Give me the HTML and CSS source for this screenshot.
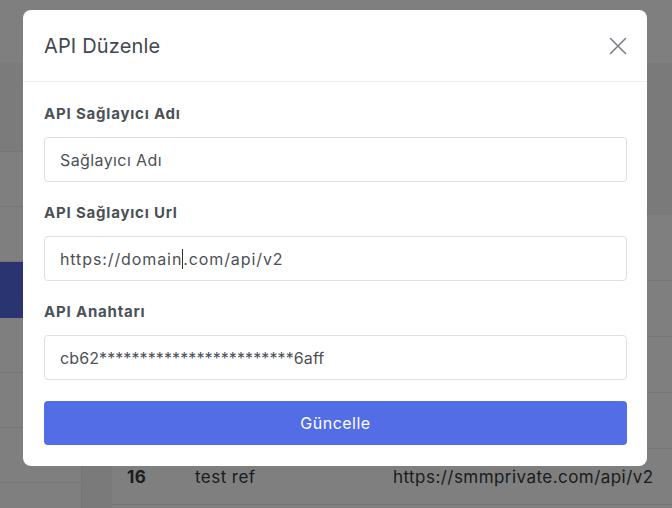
FILE: index.html
```html
<!DOCTYPE html>
<html lang="tr">
<head>
<meta charset="utf-8">
<title>API Düzenle</title>
<link rel="stylesheet" href="styles.css">
</head>
<body>
<div class="page">
  <div class="topbar"></div>
  <div class="main">
    <aside class="sidebar">
      <div class="side-user"></div>
      <div class="side-item"></div>
      <div class="side-item"></div>
      <div class="side-item active"></div>
      <div class="side-item"></div>
      <div class="side-item"></div>
      <div class="side-item"></div>
    </aside>
    <section class="content">
      <div class="card">
        <div class="thead"></div>
        <div class="trow"></div>
        <div class="trow"></div>
        <div class="trow"></div>
        <div class="trow">
          <span class="c-id">16</span>
          <span class="c-name">test ref</span>
          <span class="c-url">https://smmprivate.com/api/v2</span>
        </div>
      </div>
    </section>
  </div>
</div>
<div class="backdrop"></div>
<div class="modal">
  <div class="modal-header">
    <h4 class="modal-title">API Düzenle</h4>
    <button class="close" aria-label="Kapat">
      <svg width="18" height="18" viewBox="0 0 18 18"><path d="M1.5 1.5 L16.5 16.5 M16.5 1.5 L1.5 16.5" stroke="#7a7f85" stroke-width="1.6" fill="none" stroke-linecap="round"/></svg>
    </button>
  </div>
  <div class="modal-body">
    <label class="label">API Sağlayıcı Adı</label>
    <div class="input">Sağlayıcı Adı</div>
    <label class="label">API Sağlayıcı Url</label>
    <div class="input input-url">https://domain<span class="caret"></span>.com/api/v2</div>
    <label class="label">API Anahtarı</label>
    <div class="input input-key">cb62************************6aff</div>
    <button class="btn">Güncelle</button>
  </div>
</div>
</body>
</html>
```

FILE: styles.css
```css
* { box-sizing: border-box; }
html, body {
  margin: 0;
  padding: 0;
  width: 672px;
  height: 508px;
  overflow: hidden;
}
body {
  position: relative;
  font-family: "Inter", "Open Sans", sans-serif;
  background: #f5f5f5;
}
.page {
  display: flex;
  flex-direction: column;
  height: 508px;
}
.topbar {
  height: 63px;
  background: #ffffff;
  flex: none;
}
.main {
  flex: 1;
  display: flex;
}
.sidebar {
  width: 82px;
  background: #ffffff;
  border-right: 1px solid #ececec;
  display: flex;
  flex-direction: column;
}
.side-user {
  height: 89px;
  background: #f6f6f6;
  border-bottom: 1px solid #ececec;
}
.side-item {
  height: 55px;
  border-bottom: 1px solid #ececec;
}
.side-item.active {
  background: #5468e0;
  height: 56px;
  border-bottom: none;
}
.content {
  flex: 1;
  background: #f4f4f4;
  padding: 152px 0 0 30px;
}
.card {
  background: #ffffff;
  height: 100%;
}
.thead {
  height: 66px;
  border-bottom: 1px solid #ececec;
}
.trow {
  height: 56px;
  border-bottom: 1px solid #ececec;
  display: flex;
  align-items: center;
  font-size: 17px;
  letter-spacing: 0.45px;
  color: #343a40;
}
.c-id {
  font-weight: 700;
  width: 83px;
  padding-left: 15px;
}
.c-name {
  width: 198px;
}
.c-url {
  white-space: nowrap;
}
.backdrop {
  position: absolute;
  inset: 0;
  background: rgba(0, 0, 0, 0.5);
}
.modal {
  position: absolute;
  left: 23px;
  top: 10px;
  width: 624px;
  height: 456px;
  background: #ffffff;
  border-radius: 8px;
  display: flex;
  flex-direction: column;
}
.modal-header {
  height: 72px;
  display: flex;
  align-items: center;
  justify-content: space-between;
  padding: 0 20px 0 21px;
  border-bottom: 1px solid #eef0f3;
}
.modal-title {
  margin: 0;
  font-size: 20px;
  font-weight: 400;
  color: #42484f;
  letter-spacing: 0.15px;
}
.close {
  border: none;
  background: none;
  padding: 0;
  width: 18px;
  height: 18px;
  display: flex;
}
.modal-body {
  padding: 21px 20px 21px 21px;
  display: flex;
  flex-direction: column;
}
.label {
  font-size: 15px;
  font-weight: 700;
  color: #4b5157;
  letter-spacing: 0.8px;
  line-height: 22px;
  height: 22px;
  margin-bottom: 12px;
}
.input {
  height: 45px;
  border: 1px solid #dcdfe4;
  border-radius: 4px;
  padding: 0 15px;
  display: flex;
  align-items: center;
  font-size: 16px;
  letter-spacing: 0.4px;
  color: #4b5157;
  margin-bottom: 20px;
  white-space: nowrap;
}
.input-url {
  letter-spacing: 0.9px;
}
.input-key {
  letter-spacing: 0.1px;
}
.caret {
  display: inline-block;
  width: 1px;
  height: 20px;
  background: #333;
}
.btn {
  height: 44px;
  margin-top: 1px;
  border: none;
  border-radius: 4px;
  background: #536de6;
  color: #ffffff;
  font-family: inherit;
  font-size: 16px;
  letter-spacing: 0.5px;
  font-weight: 400;
}
```
